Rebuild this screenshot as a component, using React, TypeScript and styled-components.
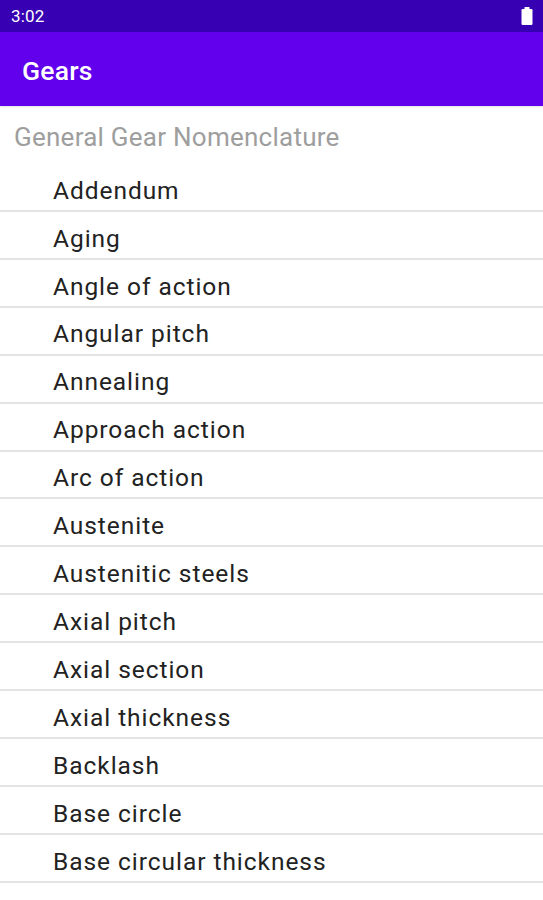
import React from "react";
import styled, { createGlobalStyle } from "styled-components";

const Global = createGlobalStyle`
  html, body {
    margin: 0;
    padding: 0;
    background: #ffffff;
    overflow: hidden;
  }
  body {
    font-family: Roboto, "Noto Sans", "Liberation Sans", sans-serif;
    -webkit-font-smoothing: antialiased;
  }
`;

const Screen = styled.div`
  width: 543px;
  height: 900px;
  display: flex;
  flex-direction: column;
  overflow: hidden;
  background: #ffffff;
`;

const StatusBar = styled.div`
  height: 32px;
  flex: 0 0 32px;
  background: #3700b3;
  display: flex;
  align-items: center;
  justify-content: space-between;
  padding: 0 10px 0 11px;
  box-sizing: border-box;
`;

const Clock = styled.span`
  color: #ffffff;
  font-size: 17px;
  letter-spacing: 0.2px;
  line-height: 1;
`;

const AppBar = styled.header`
  height: 74px;
  flex: 0 0 74px;
  background: #6200ee;
  display: flex;
  align-items: center;
  padding-left: 22px;
  padding-top: 4px;
  box-sizing: border-box;
  box-shadow: 0 1px 2px rgba(0, 0, 0, 0.12);
`;

const Title = styled.h1`
  margin: 0;
  color: #ffffff;
  font-size: 26.5px;
  font-weight: 500;
  line-height: 1;
  letter-spacing: 0.2px;
`;

const SectionHeader = styled.div`
  height: 58px;
  flex: 0 0 58px;
  display: flex;
  align-items: center;
  padding-left: 14px;
  padding-top: 3px;
  box-sizing: border-box;
  color: #9e9e9e;
  font-size: 26px;
  letter-spacing: 0.25px;
  line-height: 1;
`;

const List = styled.ul`
  list-style: none;
  margin: 0;
  padding: 0;
`;

const Row = styled.li`
  height: 47.93px;
  box-sizing: border-box;
  border-bottom: 2px solid #e4e4e4;
  display: flex;
  align-items: center;
  padding-left: 53px;
  padding-top: 8px;
  color: #222222;
  font-size: 24.5px;
  letter-spacing: 0.95px;
  line-height: 1;
`;

const Battery = () => (
  <svg width="12" height="18" viewBox="0 0 12 18" aria-hidden="true">
    <rect x="3.5" y="0" width="5" height="2.5" rx="0.5" fill="#ffffff" />
    <rect x="0.5" y="2" width="11" height="16" rx="1.2" fill="#ffffff" />
  </svg>
);

const items = [
  "Addendum",
  "Aging",
  "Angle of action",
  "Angular pitch",
  "Annealing",
  "Approach action",
  "Arc of action",
  "Austenite",
  "Austenitic steels",
  "Axial pitch",
  "Axial section",
  "Axial thickness",
  "Backlash",
  "Base circle",
  "Base circular thickness",
  "Base pitch",
  "Bearing",
];

export default function App() {
  return (
    <>
      <Global />
      <Screen>
        <StatusBar>
          <Clock>3:02</Clock>
          <Battery />
        </StatusBar>
        <AppBar>
          <Title>Gears</Title>
        </AppBar>
        <SectionHeader>General Gear Nomenclature</SectionHeader>
        <List>
          {items.map((t) => (
            <Row key={t}>{t}</Row>
          ))}
        </List>
      </Screen>
    </>
  );
}
